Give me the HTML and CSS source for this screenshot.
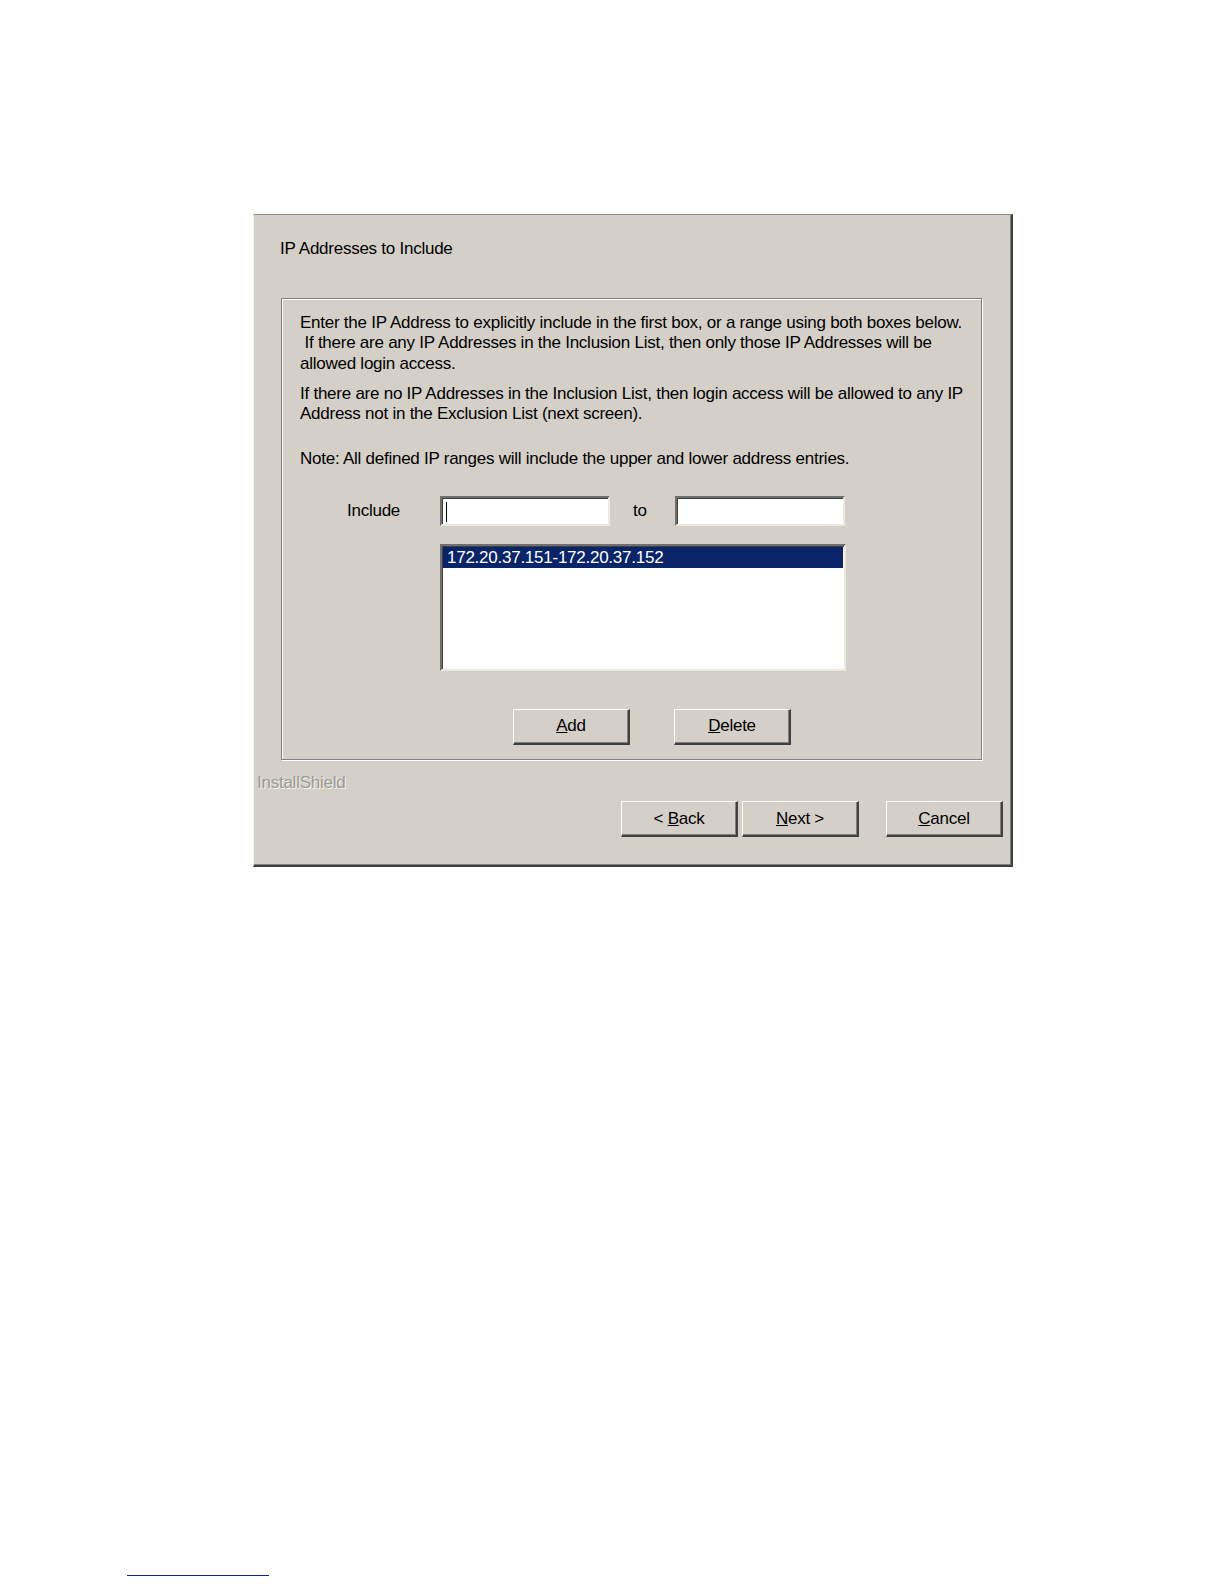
FILE: index.html
```html
<!DOCTYPE html>
<html>
<head>
    <meta charset="UTF-8">
    <title>IP Addresses to Include</title>
    <link rel="stylesheet" href="styles.css">
</head>
<body>
    <div class="pagina">
        <div class="dialogo">
            <div class="titulo">IP Addresses to Include</div>

            <div class="grupo">
                <p class="texto">Enter the IP Address to explicitly include in the first box, or a range using both boxes below.<br>&nbsp;If there are any IP Addresses in the Inclusion List, then only those IP Addresses will be<br>allowed login access.</p>
                <p class="texto">If there are no IP Addresses in the Inclusion List, then login access will be allowed to any IP<br>Address not in the Exclusion List (next screen).</p>
                <p class="texto nota">Note: All defined IP ranges will include the upper and lower address entries.</p>

                <div class="linha-include">
                    <span class="rotulo">Include</span>
                    <div class="campo"><span class="cursor"></span></div>
                    <span class="ate">to</span>
                    <div class="campo"></div>
                </div>

                <div class="lista">
                    <div class="item selecionado">172.20.37.151-172.20.37.152</div>
                </div>

                <div class="botoes-grupo">
                    <button class="botao" type="button"><u>A</u>dd</button>
                    <button class="botao" type="button"><u>D</u>elete</button>
                </div>
            </div>

            <div class="marca">InstallShield</div>

            <div class="botoes-rodape">
                <button class="botao" type="button">&lt; <u>B</u>ack</button>
                <button class="botao" type="button"><u>N</u>ext &gt;</button>
                <button class="botao cancelar" type="button"><u>C</u>ancel</button>
            </div>
        </div>
    </div>

    <div class="rodape-linha"></div>
</body>
</html>
```

FILE: styles.css
```css
body {
    margin: 0;
    background-color: #ffffff;
    font-family: "Liberation Sans", Arial, sans-serif;
    font-size: 17px;
    letter-spacing: -0.25px;
    color: #000000;
}

.pagina {
    padding-top: 214px;
    padding-left: 253px;
}

.dialogo {
    box-sizing: border-box;
    width: 760px;
    height: 653px;
    background-color: #d4d0c8;
    border-top: 1px solid #8e8e8e;
    border-left: 1px solid #f2f2f2;
    border-right: 2px solid #404040;
    border-bottom: 2px solid #404040;
    box-shadow: inset -1px -1px 0 #808080;
    display: flex;
    flex-direction: column;
}

.titulo {
    line-height: 20px;
    padding-top: 24px;
    padding-left: 26px;
}

.grupo {
    box-sizing: border-box;
    width: 701px;
    height: 462px;
    margin-top: 39px;
    margin-left: 27px;
    padding: 14px 0 0 18px;
    border: 1px solid #808080;
    box-shadow: 1px 1px 0 #ffffff, inset 1px 1px 0 #ffffff;
}

.texto {
    margin: 0 0 10px 0;
    line-height: 20.3px;
    white-space: nowrap;
}

.nota {
    margin-top: 25px;
}

.linha-include {
    display: flex;
    align-items: center;
    margin-top: 26px;
    margin-left: 47px;
}

.rotulo {
    width: 93px;
}

.ate {
    width: 42px;
    padding-left: 23px;
}

.campo {
    box-sizing: border-box;
    width: 170px;
    height: 30px;
    background-color: #ffffff;
    border-top: 2px solid #6f6f6f;
    border-left: 2px solid #6f6f6f;
    border-right: 2px solid #ebe9e4;
    border-bottom: 2px solid #ebe9e4;
    box-shadow: inset 1px 1px 0 #404040;
    padding: 4px 0 0 4px;
}

.cursor {
    display: block;
    width: 1px;
    height: 20px;
    background-color: #000000;
}

.lista {
    box-sizing: border-box;
    width: 406px;
    height: 127px;
    margin-top: 18px;
    margin-left: 140px;
    background-color: #ffffff;
    border-top: 2px solid #6f6f6f;
    border-left: 2px solid #6f6f6f;
    border-right: 2px solid #ebe9e4;
    border-bottom: 2px solid #ebe9e4;
    box-shadow: inset 1px 1px 0 #404040;
    padding: 1px 1px 0 1px;
}

.item {
    height: 21px;
    line-height: 21px;
    padding-left: 4px;
}

.selecionado {
    background-color: #0a246a;
    color: #ffffff;
}

.botoes-grupo {
    display: flex;
    gap: 44px;
    margin-top: 38px;
    margin-left: 213px;
}

.botao {
    box-sizing: border-box;
    width: 117px;
    height: 36px;
    margin: 0;
    padding: 0;
    font-family: "Liberation Sans", Arial, sans-serif;
    font-size: 17px;
    letter-spacing: -0.25px;
    color: #000000;
    background-color: #d4d0c8;
    border-top: 1px solid #ffffff;
    border-left: 1px solid #ffffff;
    border-right: 2px solid #404040;
    border-bottom: 2px solid #404040;
    box-shadow: inset -1px -1px 0 #808080;
}

.marca {
    margin-top: 13px;
    padding-left: 3px;
    line-height: 20px;
    color: #9c9a94;
    text-shadow: 1px 1px 0 #f4f3f0;
}

.botoes-rodape {
    display: flex;
    justify-content: flex-end;
    gap: 4px;
    margin-top: 8px;
    padding-right: 8px;
}

.cancelar {
    margin-left: 23px;
}

.rodape-linha {
    width: 142px;
    height: 1px;
    margin-top: 708px;
    margin-left: 127px;
    background-color: #1c1c8c;
}
```
